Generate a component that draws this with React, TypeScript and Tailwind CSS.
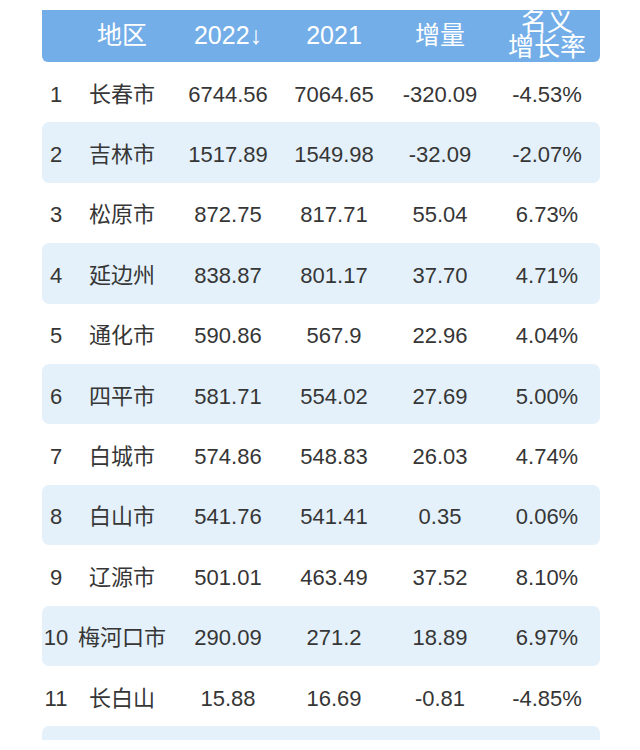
import React from 'react';

type Row = [string, string, string, string, string, string];

const rows: Row[] = [
  ['1', '长春市', '6744.56', '7064.65', '-320.09', '-4.53%'],
  ['2', '吉林市', '1517.89', '1549.98', '-32.09', '-2.07%'],
  ['3', '松原市', '872.75', '817.71', '55.04', '6.73%'],
  ['4', '延边州', '838.87', '801.17', '37.70', '4.71%'],
  ['5', '通化市', '590.86', '567.9', '22.96', '4.04%'],
  ['6', '四平市', '581.71', '554.02', '27.69', '5.00%'],
  ['7', '白城市', '574.86', '548.83', '26.03', '4.74%'],
  ['8', '白山市', '541.76', '541.41', '0.35', '0.06%'],
  ['9', '辽源市', '501.01', '463.49', '37.52', '8.10%'],
  ['10', '梅河口市', '290.09', '271.2', '18.89', '6.97%'],
  ['11', '长白山', '15.88', '16.69', '-0.81', '-4.85%'],
  ['', '', '', '', '', ''],
];

const cols = 'grid grid-cols-[28px_104px_108px_104px_108px_106px]';

export default function App() {
  return (
    <div className="min-h-[750px] bg-white pt-[10px] font-['Liberation_Sans','Noto_Sans_CJK_SC',sans-serif]">
      <div className="ml-[42px] h-[730px] w-[558px] overflow-hidden">
        {/* Header */}
        <div className={`${cols} h-[52px] rounded-b-[6px] bg-[#74aee8] text-[25px] text-white`}>
          <div />
          <div className="flex items-center justify-center pb-[2px]">地区</div>
          <div className="flex items-center justify-center pb-[2px]">2022↓</div>
          <div className="flex items-center justify-center pb-[2px]">2021</div>
          <div className="flex items-center justify-center pb-[2px]">增量</div>
          <div className="flex items-end justify-center pb-[4px] text-[26px] leading-[25px]">
            <div className="text-center">
              名义
              <br />
              增长率
            </div>
          </div>
        </div>

        {/* Rows */}
        {rows.map((r, i) => (
          <div
            key={i}
            className={`${cols} h-[60.4px] items-center pt-[4px] text-[22px] text-[#363636] ${
              i % 2 === 1 ? 'rounded-[7px] bg-[#e4f1fa]' : ''
            }`}
          >
            <div className="whitespace-nowrap text-center">{r[0]}</div>
            <div className="whitespace-nowrap text-center">{r[1]}</div>
            <div className="text-center">{r[2]}</div>
            <div className="text-center">{r[3]}</div>
            <div className="text-center">{r[4]}</div>
            <div className="text-center">{r[5]}</div>
          </div>
        ))}
      </div>
    </div>
  );
}
